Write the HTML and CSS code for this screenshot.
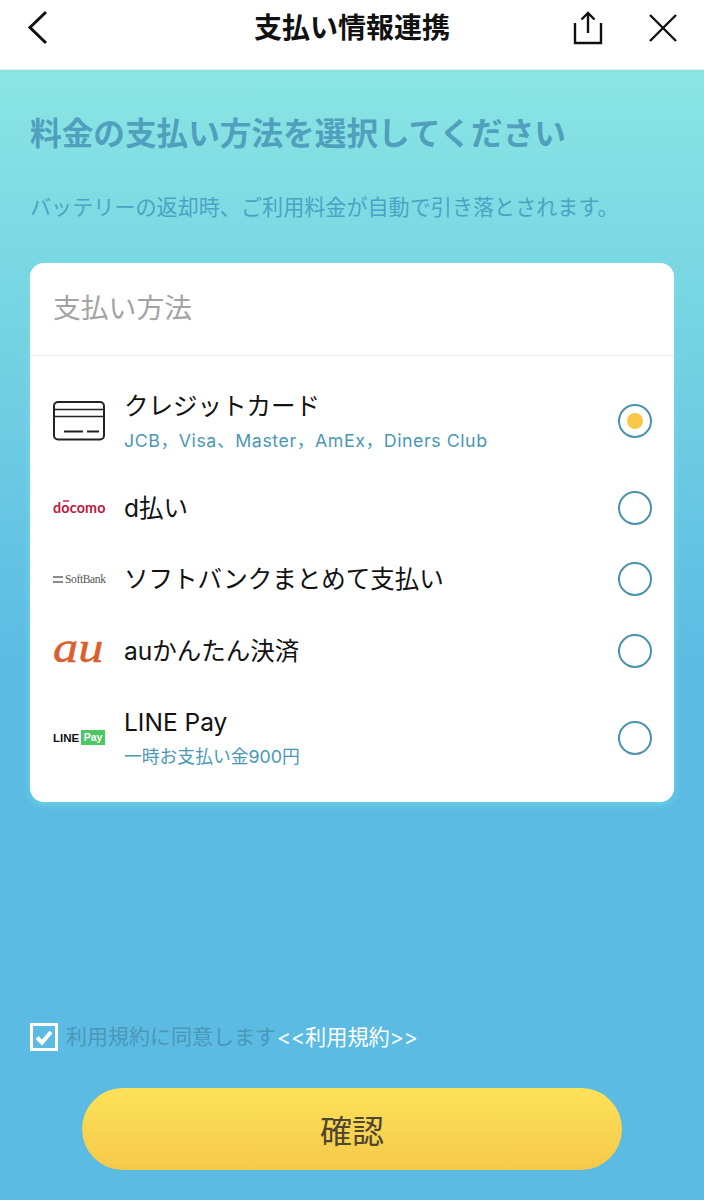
FILE: index.html
```html
<!DOCTYPE html>
<html lang="ja">
<head>
<meta charset="utf-8">
<title>支払い情報連携</title>
<link rel="stylesheet" href="styles.css">
</head>
<body>
<div class="page">
  <header class="topbar">
    <svg class="ic-back" width="24" height="36" viewBox="0 0 24 36"><path d="M20 2 4 17.500 20 33" fill="none" stroke="#111" stroke-width="3"/></svg>
    <h1 class="topbar-title">支払い情報連携</h1>
    <div class="topbar-actions">
      <svg width="34" height="36" viewBox="0 0 34 36"><path d="M17 23V3M10.500 9.500 17 3l6.500 6.500M4 13v20h26V13" fill="none" stroke="#111" stroke-width="2.400"/></svg>
      <svg width="32" height="32" viewBox="0 0 32 32"><path d="M3 3l26 26M29 3 3 29" fill="none" stroke="#111" stroke-width="2.400"/></svg>
    </div>
  </header>
  <main class="content">
    <h2 class="heading">料金の支払い方法を選択してください</h2>
    <p class="lead">バッテリーの返却時、ご利用料金が自動で引き落とされます。</p>
    <section class="card">
      <div class="card-title">支払い方法</div>
      <ul class="methods">
        <li class="method method-tall">
          <span class="logo">
            <svg width="52" height="40" viewBox="0 0 52 40"><rect x="1" y="1" width="50" height="37.500" rx="4" fill="none" stroke="#222" stroke-width="2"/><path d="M1 8.500h50M1 15.500h50" stroke="#222" stroke-width="1.500" fill="none"/><path d="M11 30.500h19M34 30.500h12" stroke="#222" stroke-width="2" fill="none"/></svg>
          </span>
          <span class="method-text"><span class="name">クレジットカード</span><span class="sub sub-wide">JCB，Visa、Master，AmEx，Diners Club</span></span>
          <span class="radio radio-on"></span>
        </li>
        <li class="method">
          <span class="logo"><span class="logo-docomo">docomo<span class="docomo-dots"></span></span></span>
          <span class="method-text"><span class="name">d払い</span></span>
          <span class="radio"></span>
        </li>
        <li class="method">
          <span class="logo logo-sb-wrap"><span class="sb-bars"></span><span class="logo-sb">SoftBank</span></span>
          <span class="method-text"><span class="name">ソフトバンクまとめて支払い</span></span>
          <span class="radio"></span>
        </li>
        <li class="method">
          <span class="logo"><span class="logo-au">au</span></span>
          <span class="method-text"><span class="name">auかんたん決済</span></span>
          <span class="radio"></span>
        </li>
        <li class="method method-tall">
          <span class="logo logo-line-wrap"><span class="logo-line">LINE</span><span class="logo-pay">Pay</span></span>
          <span class="method-text"><span class="name">LINE Pay</span><span class="sub">一時お支払い金900円</span></span>
          <span class="radio"></span>
        </li>
      </ul>
    </section>
    <div class="footer">
      <div class="agree">
        <span class="checkbox">
          <svg width="22" height="22" viewBox="0 0 22 22"><path d="M4 11.500 9 16.500 18 6" fill="none" stroke="#fff" stroke-width="4"/></svg>
        </span>
        <span class="agree-text">利用規約に同意します</span><a class="agree-link">&lt;&lt;利用規約&gt;&gt;</a>
      </div>
      <button class="confirm" type="button">確認</button>
    </div>
  </main>
</div>
</body>
</html>
```

FILE: styles.css
```css
* { box-sizing: border-box; }
html, body { margin: 0; padding: 0; }
body {
  font-family: Inter, "Noto Sans CJK JP", sans-serif;
  color: #111;
  background: #5bbbe3;
}
.page {
  width: 704px;
  height: 1200px;
  display: flex;
  flex-direction: column;
  overflow: hidden;
}
.topbar {
  height: 70px;
  flex: none;
  background: #fff;
  border-bottom: 1px solid #e4eeee;
  display: flex;
  align-items: center;
  justify-content: space-between;
  padding: 0 25px 13px 26px;
  position: relative;
}
.topbar-title {
  position: absolute;
  left: 0;
  right: 0;
  top: 8px;
  margin: 0;
  text-align: center;
  font-size: 28px;
  line-height: 40px;
  font-weight: 700;
}
.topbar-actions {
  display: flex;
  align-items: center;
  gap: 42px;
}
.content {
  flex: 1;
  display: flex;
  flex-direction: column;
  padding: 0 30px;
  background: linear-gradient(180deg, #8ae5e3 0%, #5bbbe3 53%, #5bbbe3 100%);
}
.heading {
  margin: 41px 0 0;
  font-size: 31.650px;
  line-height: 46px;
  font-weight: 700;
  color: #4f9fbd;
  white-space: nowrap;
}
.lead {
  margin: 36px 0 0;
  font-size: 21.100px;
  line-height: 30px;
  color: #4ba3c3;
  white-space: nowrap;
}
.card {
  margin-top: 40px;
  background: #fff;
  border-radius: 14px;
  box-shadow: 0 2px 8px rgba(120, 225, 225, .7);
}
.card-title {
  height: 93px;
  padding: 25px 23px 0;
  font-size: 27.800px;
  line-height: 40px;
  color: #a3a3a3;
  border-bottom: 1px solid #eaeef0;
}
.methods {
  list-style: none;
  margin: 0;
  padding: 14px 22px 13px 23px;
}
.method {
  height: 71.500px;
  display: flex;
  align-items: center;
  gap: 18px;
}
.method-tall { height: 102px; }
.logo {
  width: 53px;
  flex: none;
  display: flex;
  align-items: center;
  justify-content: flex-start;
}
.method-text {
  flex: 1;
  display: flex;
  flex-direction: column;
  min-width: 0;
}
.name {
  font-size: 24.500px;
  line-height: 36px;
  color: #111;
  white-space: nowrap;
}
.sub {
  font-size: 17.800px;
  line-height: 28px;
  margin-top: 3px;
  color: #4a97b5;
  white-space: nowrap;
}
.sub-wide { letter-spacing: .55px; }
.radio {
  flex: none;
  width: 34px;
  height: 34px;
  border-radius: 50%;
  border: 2px solid #4a92ad;
  display: flex;
  align-items: center;
  justify-content: center;
}
.radio-on::after {
  content: "";
  width: 16px;
  height: 16px;
  border-radius: 50%;
  background: #f9c846;
}
.logo-docomo {
  position: relative;
  font-family: Lato, sans-serif;
  font-size: 14.300px;
  line-height: 16px;
  font-weight: 700;
  color: #c0183c;
  letter-spacing: .2px;
}
.docomo-dots {
  position: absolute;
  left: 10px;
  top: 0;
  width: 6px;
  height: 2px;
  background: radial-gradient(circle, #c0183c 0 .7px, transparent 1px) 0 0 / 2px 2px;
  opacity: .7;
}
.logo-sb-wrap { gap: 2px; }
.sb-bars {
  width: 10px;
  height: 7px;
  flex: none;
  border-top: 2px solid #8a8a8a;
  border-bottom: 2px solid #8a8a8a;
}
.logo-sb {
  font-family: "Liberation Serif", serif;
  font-size: 11.500px;
  color: #555;
  letter-spacing: -.35px;
  white-space: nowrap;
}
.logo-au {
  font-family: "Liberation Serif", serif;
  font-style: italic;
  font-size: 45px;
  line-height: 32px;
  color: #d9602e;
  -webkit-text-stroke: .5px #d9602e;
  transform: scaleX(1.120);
  transform-origin: left center;
  margin-top: -8px;
}
.logo-line-wrap { gap: 3px; }
.logo-line {
  width: 25px;
  flex: none;
  font-family: "Liberation Sans", sans-serif;
  font-weight: 700;
  font-size: 11.500px;
  color: #111;
}
.logo-pay {
  width: 24px;
  flex: none;
  text-align: center;
  background: #4cc764;
  color: #fff;
  font-family: "Liberation Sans", sans-serif;
  font-weight: 700;
  font-size: 10.500px;
  line-height: 15px;
}
.footer {
  margin-top: auto;
  display: flex;
  flex-direction: column;
  padding-bottom: 30px;
}
.agree {
  display: flex;
  align-items: center;
  font-size: 21px;
  line-height: 30px;
  white-space: nowrap;
}
.checkbox {
  width: 28px;
  height: 28px;
  flex: none;
  border: 3px solid #fff;
  margin-right: 8px;
  display: flex;
  align-items: center;
  justify-content: center;
}
.agree-text { color: #4a97b8; }
.agree-link { color: #fff; margin-left: 1px; font-size: 21.200px; }
.confirm {
  margin: 36px 22px 0 52px;
  width: 540px;
  height: 82px;
  border: 0;
  border-radius: 41px;
  background: linear-gradient(180deg, #fce258 0%, #f6c84a 100%);
  font-family: inherit;
  font-size: 32px;
  color: #4d4630;
}
```
